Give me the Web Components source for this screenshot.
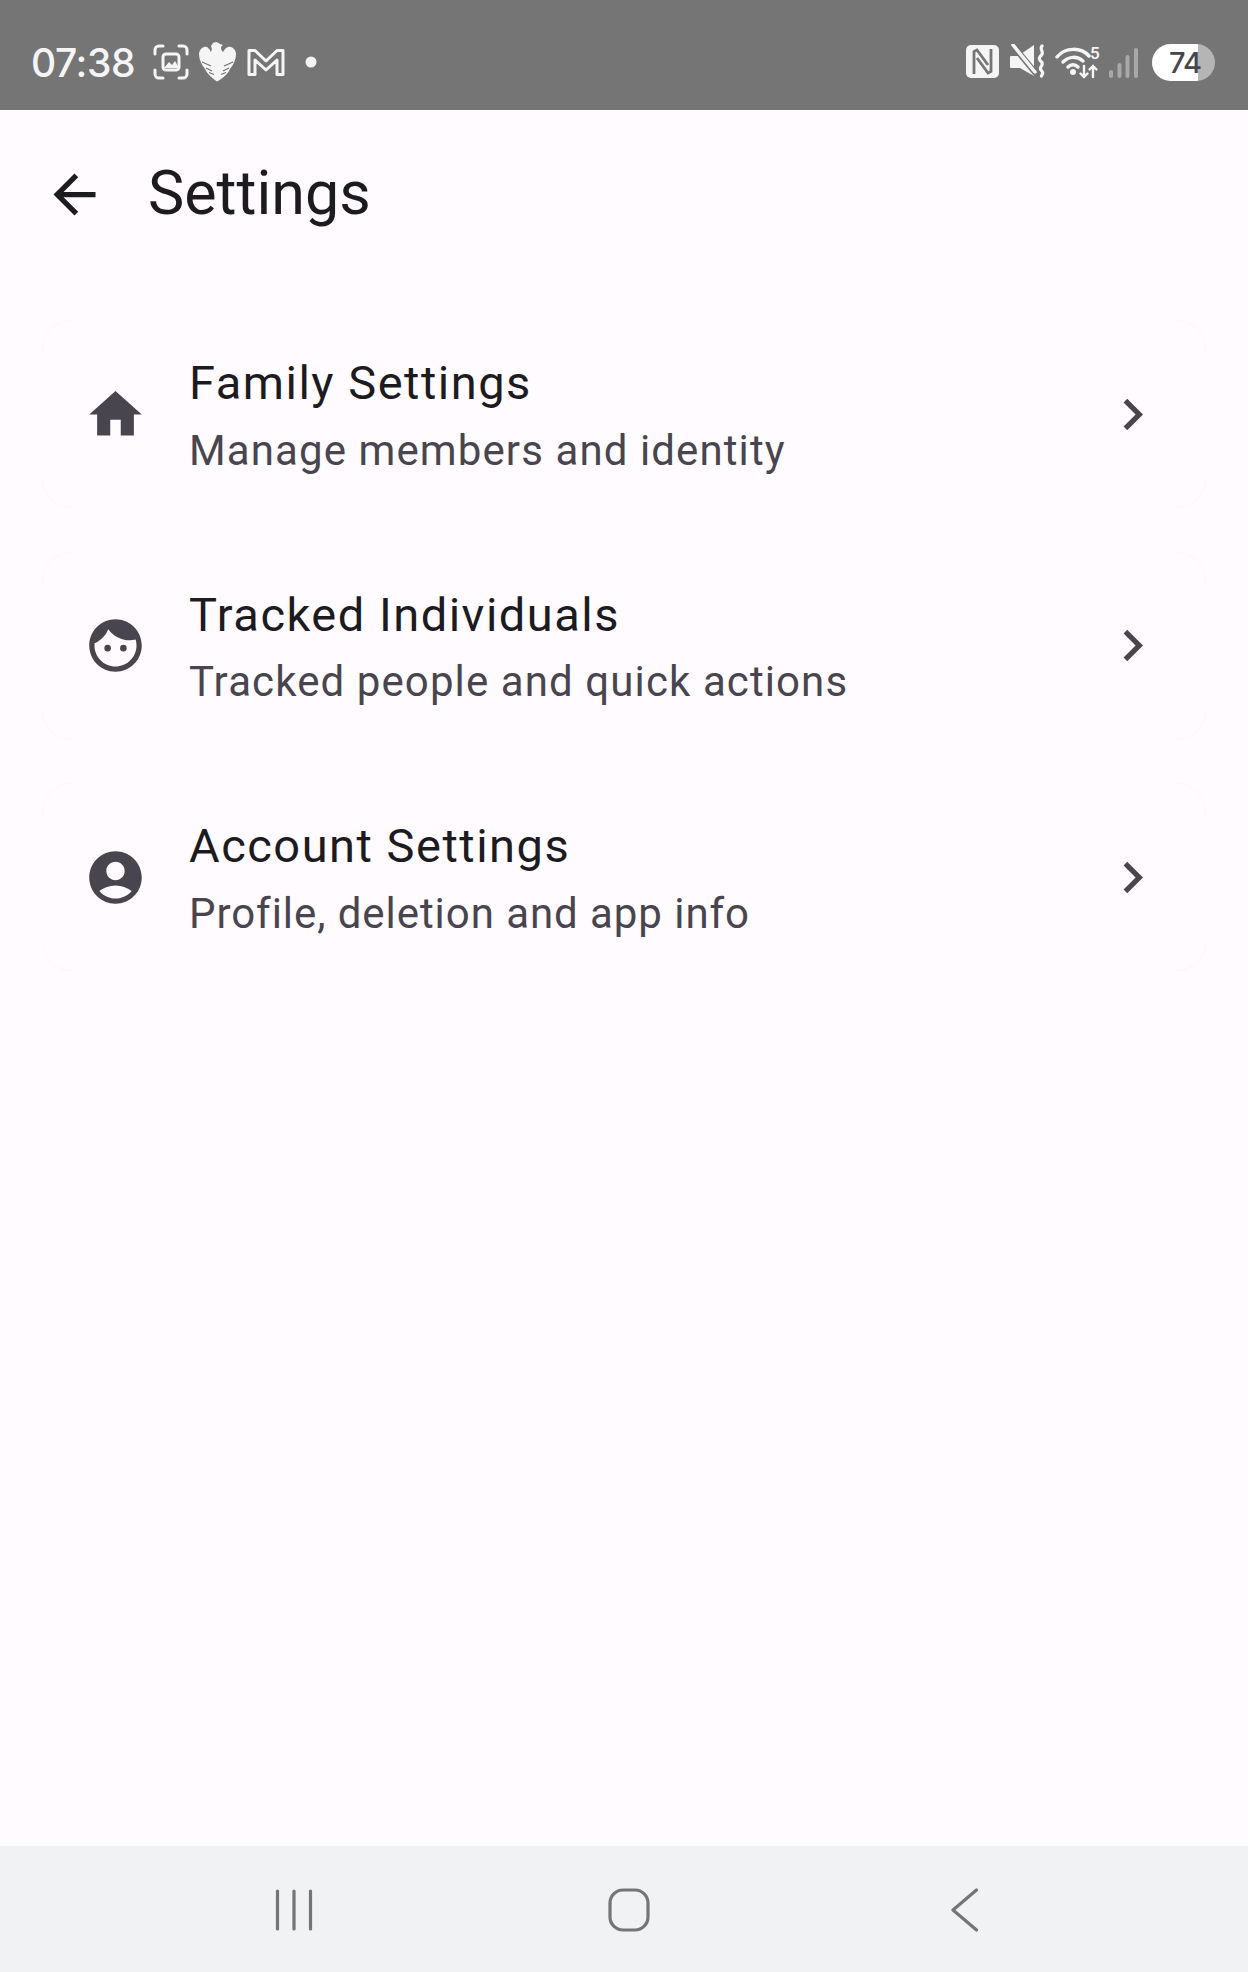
<!DOCTYPE html>
<html>
<head>
<meta charset="utf-8">
<title>Settings</title>
<style>
  html, body { margin: 0; height: 100%; }
  body { font-family: Roboto, "Noto Sans", sans-serif; background: #fffbfe; }
  settings-page { height: 1972px; }
</style>
</head>
<body>
<settings-page>
  <status-bar slot="top" time="07:38" battery="74"></status-bar>
  <app-bar slot="top" title="Settings"></app-bar>
  <settings-card icon="home" title="Family Settings" sub="Manage members and identity"></settings-card>
  <settings-card icon="face" title="Tracked Individuals" sub="Tracked people and quick actions"></settings-card>
  <settings-card style="--sub-spacing:.94px" icon="account" title="Account Settings" sub="Profile, deletion and app info"></settings-card>
  <nav-bar slot="bottom"></nav-bar>
</settings-page>

<script>
// material style icons, 24 unit box
const ICONS = {
  home: '<path d="M10 20v-6h4v6h5v-8h3L12 3 2 12h3v8z"/>',
  face: '<path fill-rule="evenodd" d="M12 2C6.48 2 2 6.48 2 12s4.48 10 10 10 10-4.48 10-10S17.52 2 12 2zm0 18c-4.41 0-8-3.59-8-8 0-.29.02-.58.05-.86 2.36-1.05 4.23-2.98 5.21-5.37C11.07 8.33 14.05 10 17.42 10c.78 0 1.53-.09 2.25-.26.21.71.33 1.47.33 2.26 0 4.41-3.59 8-8 8z"/><circle cx="9" cy="13" r="1.25"/><circle cx="15" cy="13" r="1.25"/>',
  account: '<path fill-rule="evenodd" d="M12 2C6.48 2 2 6.48 2 12s4.48 10 10 10 10-4.48 10-10S17.52 2 12 2zm0 4c1.93 0 3.5 1.57 3.5 3.5S13.93 13 12 13s-3.5-1.57-3.5-3.5S10.07 6 12 6zm0 14c-2.03 0-4.43-.82-6.14-2.88C7.55 15.8 9.68 15 12 15s4.45.8 6.14 2.12C16.43 19.18 14.03 20 12 20z"/>',
  chevron: '<path d="M10 6 8.59 7.41 13.17 12l-4.58 4.59L10 18l6-6z"/>',
  back: '<path d="M20 11H7.83l5.59-5.59L12 4l-8 8 8 8 1.41-1.41L7.83 13H20v-2z"/>'
};

class SettingsPage extends HTMLElement {
  constructor() {
    super();
    this.attachShadow({ mode: 'open' }).innerHTML = `
      <style>
        :host { display: flex; flex-direction: column; background: #fffbfe; }
        .list { flex: 1; display: flex; flex-direction: column; gap: 43.500px; padding: 42px 42px 0; }
      </style>
      <slot name="top"></slot>
      <div class="list"><slot></slot></div>
      <slot name="bottom"></slot>`;
  }
}

class StatusBar extends HTMLElement {
  constructor() {
    super();
    this.attachShadow({ mode: 'open' }).innerHTML = `
      <style>
        :host { display: flex; align-items: center; height: 110px; background: #757575; color: #f5f5f5; box-sizing: border-box; padding: 14px 33px 0 31px; }
        .time { font: 500 39px/1 Inter, Roboto, sans-serif; letter-spacing: -.4px; width: 122px; }
        .group { display: flex; align-items: center; }
        .spacer { flex: 1; }
        svg { display: block; flex: none; }
        .batt { width: 63px; height: 37px; border-radius: 19px; margin-left: 14px; box-sizing: border-box; padding-left: 17px; background: linear-gradient(90deg, #fff 46px, #b5b5b5 46px); font: 500 29px/37px Inter, Roboto, sans-serif; letter-spacing: -1px; color: #48464c; }
      </style>
      <div class="time" id="time"></div>
      <div class="group">
        <svg width="36" height="36" viewBox="0 0 36 36" fill="none" stroke="#f5f5f5" stroke-width="3" stroke-linecap="round">
          <path d="M2 10V6a4 4 0 0 1 4-4h4M26 2h4a4 4 0 0 1 4 4v4M34 26v4a4 4 0 0 1-4 4h-4M10 34H6a4 4 0 0 1-4-4v-4"/>
          <rect x="10" y="10" width="16" height="16" rx="3"/>
          <path d="M11 24l5-6 3 3 3-4 4 7z" fill="#f5f5f5" stroke="none"/>
        </svg>
        <svg style="margin-left:10px" width="38" height="40" viewBox="0 0 38 40" fill="#f5f5f5">
          <path d="M18 39.500C14 37 9 33 6 27 2 22 0 17 0 12 0 9 2 6 5 5c3-1 5 1 7 5 1-2 1-4 0-6l2-3c2-1.500 5-1 7 1l3 1-2 2c0 3 1 4 2 5 2-3 4-6 8-5 3 1 5 4 5 7 0 5-2 10-6 15-3 6-8 10-13 12.500z"/>
          <path d="M3 20l9 4M7 26l6 3M10 30.500l5 2M34 20l-9 4M30 26l-6 3M27 30.500l-5 2" stroke="#757575" stroke-width="1.300"/>
        </svg>
        <svg style="margin-left:10px" width="38" height="30" viewBox="0 0 38 30" fill="none" stroke="#f5f5f5" stroke-width="3" stroke-linejoin="round">
          <path d="M2 3.500h6L19 14 30 3.500h6V27.500h-6V13L19 23 8 13v14.500H2z"/>
        </svg>
        <svg style="margin-left:20px" width="12" height="12" viewBox="0 0 12 12" fill="#f5f5f5"><circle cx="6" cy="6" r="5.500"/></svg>
      </div>
      <div class="spacer"></div>
      <div class="group">
        <svg width="34" height="34" viewBox="0 0 34 34">
          <rect x="0" y="0" width="33" height="33" rx="5" fill="#f5f5f5"/>
          <path d="M8 29V6.500L11 5 22 20M25 4V26.500L22 28 11 13" fill="none" stroke="#757575" stroke-width="2.800"/>
        </svg>
        <svg style="margin-left:10px" width="36" height="36" viewBox="0 0 36 36" fill="#f5f5f5">
          <path d="M0 13a1 1 0 0 1 1-1h7L24 1v31L10 24H1a1 1 0 0 1-1-1z"/>
          <path d="M0-2 28 32" stroke="#757575" stroke-width="6"/>
          <path d="M3 1 25 28" stroke="#f5f5f5" stroke-width="3.500" stroke-linecap="round"/>
          <path d="M32 2c-3 3 2.500 6-.5 9s-3 4 0 7-3 5-.5 8 2 3 .5 6" fill="none" stroke="#f5f5f5" stroke-width="3.200" stroke-linecap="round"/>
        </svg>
        <svg style="margin-left:9px" width="46" height="40" viewBox="0 -3 46 40" fill="none" stroke="#f5f5f5" stroke-linecap="round">
          <path d="M2 12C10 2 26 2 34 11" stroke-width="3.500"/>
          <path d="M8 17c6-6 14-6 20-1" stroke-width="3.500"/>
          <path d="M13 22c3-3 7-3 10 0" stroke-width="3.500"/>
          <circle cx="18" cy="27" r="3" fill="#f5f5f5" stroke="none"/>
          <path d="M29 21v11M25.500 28.500 29 32l3.500-3.500M38 32V21M34.500 24.500 38 21 41.500 24.500" stroke-width="2.400"/>
          <text x="35" y="14" font-family="Roboto, sans-serif" font-weight="500" font-size="17" fill="#f5f5f5" stroke="none">5</text>
        </svg>
        <svg style="margin-left:8px" width="29" height="34" viewBox="0 0 29 34" fill="#a8a8a8">
          <rect x="0" y="25" width="4" height="8" rx="2"/>
          <rect x="8.500" y="18" width="4" height="15" rx="2"/>
          <rect x="16.500" y="10" width="4" height="23" rx="2"/>
          <rect x="25" y="3" width="4" height="30" rx="2"/>
        </svg>
        <div class="batt" id="batt"></div>
      </div>`;
  }
  connectedCallback() {
    this.shadowRoot.getElementById('time').textContent = this.getAttribute('time');
    this.shadowRoot.getElementById('batt').textContent = this.getAttribute('battery');
  }
}

class AppBar extends HTMLElement {
  constructor() {
    super();
    this.attachShadow({ mode: 'open' }).innerHTML = `
      <style>
        :host { display: flex; align-items: center; height: 168px; padding-left: 43px; color: #1c1b1f; }
        svg { width: 63px; height: 63px; fill: #1c1b1f; flex: none; }
        h1 { margin: -1px 0 0 42px; font: 400 61px/1 Roboto, sans-serif; }
      </style>
      <svg viewBox="0 0 24 24">${ICONS.back}</svg>
      <h1 id="t"></h1>`;
  }
  connectedCallback() {
    this.shadowRoot.getElementById('t').textContent = this.getAttribute('title');
  }
}

class SettingsCard extends HTMLElement {
  constructor() {
    super();
    this.attachShadow({ mode: 'open' }).innerHTML = `
      <style>
        :host { position: relative; display: flex; align-items: center; height: 188px; box-sizing: border-box; padding: 0 42px; }
        /* only the rounded corners of the outline show up */
        :host::before {
          content: ""; position: absolute; inset: 0; border: 1px solid #faf6f9; border-radius: 29px;
          -webkit-mask: linear-gradient(#000,#000) 0 0/30px 30px no-repeat, linear-gradient(#000,#000) 100% 0/30px 30px no-repeat,
                        linear-gradient(#000,#000) 0 100%/30px 30px no-repeat, linear-gradient(#000,#000) 100% 100%/30px 30px no-repeat;
        }
        svg { width: 63px; height: 63px; fill: #49454f; flex: none; }
        .text { flex: 1; margin-left: 42px; padding-top: 7px; }
        .title { font: 400 47px/52px Roboto, sans-serif; letter-spacing: 1.500px; color: #1c1b1f; margin-top: -1px; }
        .sub { font: 400 42px/52px Roboto, sans-serif; letter-spacing: var(--sub-spacing, 1.100px); color: #49454f; margin-top: 15.700px; }
      </style>
      <svg id="icon" viewBox="0 0 24 24"></svg>
      <div class="text">
        <div class="title" id="title"></div>
        <div class="sub" id="sub"></div>
      </div>
      <svg viewBox="0 0 24 24">${ICONS.chevron}</svg>`;
  }
  connectedCallback() {
    this.shadowRoot.getElementById('icon').innerHTML = ICONS[this.getAttribute('icon')];
    this.shadowRoot.getElementById('title').textContent = this.getAttribute('title');
    this.shadowRoot.getElementById('sub').textContent = this.getAttribute('sub');
  }
}

class NavBar extends HTMLElement {
  constructor() {
    super();
    this.attachShadow({ mode: 'open' }).innerHTML = `
      <style>
        :host { display: flex; align-items: center; justify-content: space-between; height: 126px; box-sizing: border-box; padding: 1px 268px 0 274px; background: #f1f2f4; }
        svg { display: block; fill: none; stroke: #757575; stroke-width: 3.200; stroke-linecap: round; stroke-linejoin: round; }
      </style>
      <svg width="40" height="44" viewBox="0 0 40 44"><path d="M3.500 3v38M20 3v38M36.500 3v38"/></svg>
      <svg style="margin-right:7px" width="42" height="44" viewBox="0 0 42 44"><rect x="2" y="2" width="38" height="40" rx="13"/></svg>
      <svg width="30" height="44" viewBox="0 0 30 44"><path d="M26.500 2 3 22l23.500 20"/></svg>`;
  }
}

customElements.define('settings-page', SettingsPage);
customElements.define('status-bar', StatusBar);
customElements.define('app-bar', AppBar);
customElements.define('settings-card', SettingsCard);
customElements.define('nav-bar', NavBar);
</script>
</body>
</html>
